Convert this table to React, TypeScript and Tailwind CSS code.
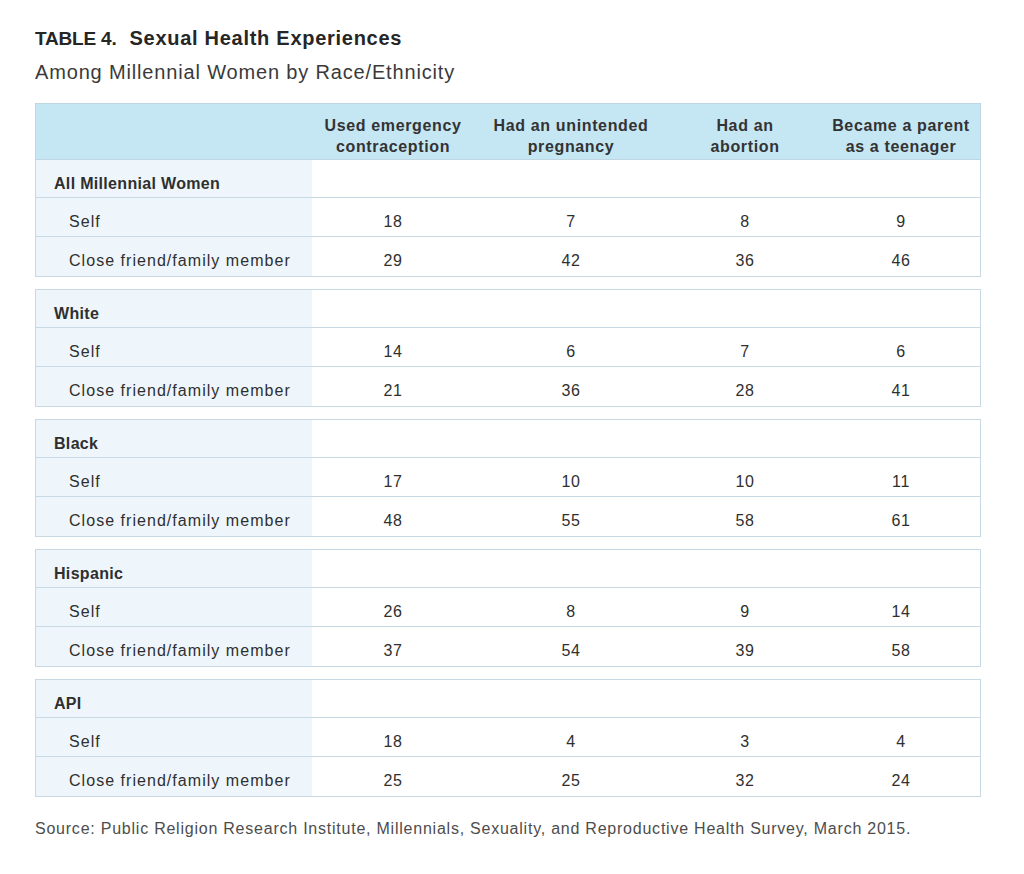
type Group = {
  name: string;
  self: number[];
  close: number[];
};

const columns = [
  ['Used emergency', 'contraception'],
  ['Had an unintended', 'pregnancy'],
  ['Had an', 'abortion'],
  ['Became a parent', 'as a teenager'],
];

const groups: Group[] = [
  { name: 'All Millennial Women', self: [18, 7, 8, 9], close: [29, 42, 36, 46] },
  { name: 'White', self: [14, 6, 7, 6], close: [21, 36, 28, 41] },
  { name: 'Black', self: [17, 10, 10, 11], close: [48, 55, 58, 61] },
  { name: 'Hispanic', self: [26, 8, 9, 14], close: [37, 54, 39, 58] },
  { name: 'API', self: [18, 4, 3, 4], close: [25, 25, 32, 24] },
];

const grid = 'grid grid-cols-[276px_162px_194px_154px_1fr]';

function Row({ label, values, bold }: { label: string; values?: number[]; bold?: boolean }) {
  return (
    <div
      className={`${grid} text-[16px] leading-[20px] text-[#2f2f2f] ${
        bold ? 'h-[38px]' : 'h-[39px]'
      }`}
    >
      <div
        className={`bg-[#eef6fb] pt-[14px] ${
          bold ? 'pl-[18px] font-bold tracking-[0.02em]' : 'pl-[33px] tracking-[0.065em]'
        }`}
      >
        {label}
      </div>
      {[0, 1, 2, 3].map((i) => (
        <div key={i} className="pt-[14px] text-center tracking-[0.04em]">
          {values ? values[i] : ''}
        </div>
      ))}
    </div>
  );
}

function GroupBlock({ group, first }: { group: Group; first: boolean }) {
  return (
    <div
      className={`border-[#c9d9e4] divide-y divide-[#c9d9e4] ${
        first ? 'border-x border-b' : 'mt-[12px] border'
      }`}
    >
      <Row label={group.name} bold />
      <Row label="Self" values={group.self} />
      <Row label="Close friend/family member" values={group.close} />
    </div>
  );
}

export default function App() {
  return (
    <div className="min-h-[874px] w-[1024px] bg-white font-['Liberation_Sans',Arial,sans-serif]">
      <div className="pl-[35px] pt-[26px]">
        {/* Titulo */}
        <h1 className="text-[20px] leading-[24px] font-bold text-[#262626]">
          <span className="text-[19px] tracking-[-0.01em]">TABLE 4.</span>
          <span className="ml-[13px] tracking-[0.036em]">Sexual Health Experiences</span>
        </h1>
        <p className="mt-[9px] text-[20px] leading-[24px] font-light tracking-[0.042em] text-[#3a3a3a]">
          Among Millennial Women by Race/Ethnicity
        </p>

        {/* Tabla */}
        <div className="mt-[19px] w-[946px]">
          <div className={`${grid} h-[57px] border border-[#c0d6e2] bg-[#c5e6f3]`}>
            <div />
            {columns.map((c, i) => (
              <div
                key={i}
                className="pt-[12px] text-center text-[16px] leading-[20.5px] font-bold tracking-[0.04em] text-[#333333]"
              >
                <div>{c[0]}</div>
                <div>{c[1]}</div>
              </div>
            ))}
          </div>
          {groups.map((g, i) => (
            <GroupBlock key={g.name} group={g} first={i === 0} />
          ))}
        </div>

        <p className="mt-[22px] text-[16px] leading-[20px] tracking-[0.048em] text-[#4d4d4d]">
          Source: Public Religion Research Institute, Millennials, Sexuality, and Reproductive Health Survey, March 2015.
        </p>
      </div>
    </div>
  );
}
